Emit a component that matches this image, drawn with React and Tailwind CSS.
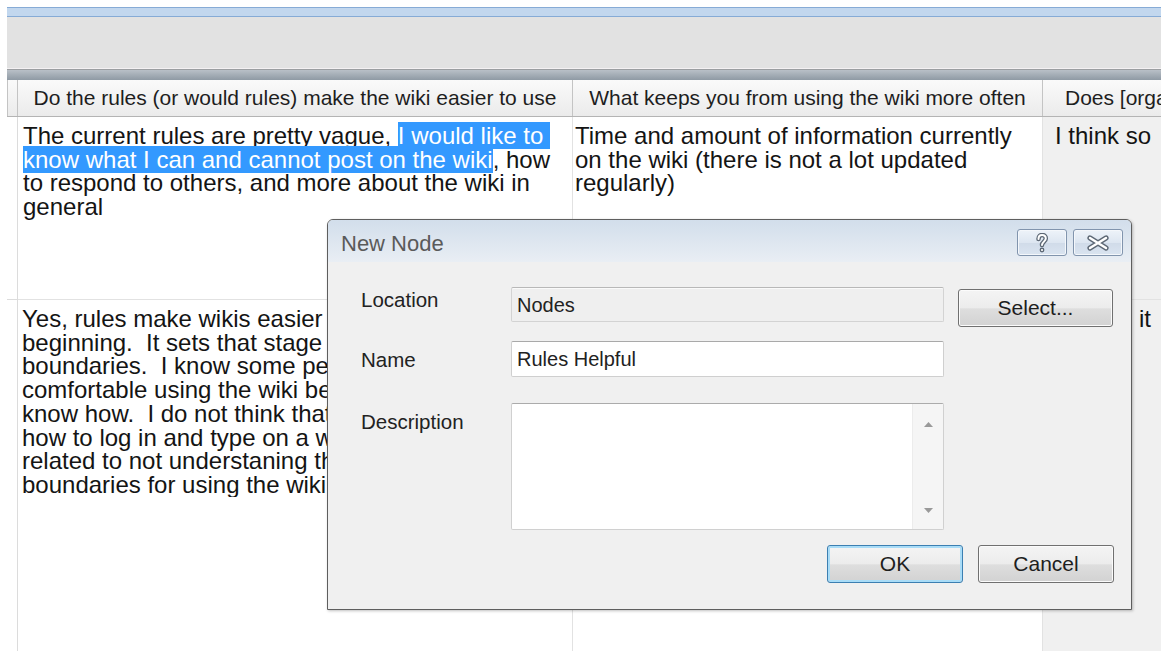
const sel = 'bg-[#3399ff] text-white'

// second answer, cut where the dialog starts
const reasons = [
  'Yes, rules make wikis easier',
  'beginning.  It sets that stage',
  'boundaries.  I know some peo',
  'comfortable using the wiki bec',
  'know how.  I do not think that',
  'how to log in and type on a wi',
  'related to not understaning the',
  'boundaries for using the wiki.',
]

function Line({ children }) {
  return <div className="whitespace-pre">{children}</div>
}

function WinButton({ children, focused, className = '' }) {
  return (
    <div
      className={
        'flex items-center justify-center rounded-[3px] border bg-[linear-gradient(#f4f4f4,#ececec_50%,#dedede_52%,#d2d2d2)] text-[21px] text-[#1e1e1e] ' +
        (focused
          ? 'border-[#3c7fb1] shadow-[inset_0_0_0_2px_#a9dcf7]'
          : 'border-[#707070] shadow-[inset_0_0_0_1px_#fbfbfb]') +
        ' ' +
        className
      }
    >
      {children}
    </div>
  )
}

function CaptionButton({ children }) {
  return (
    <div className="flex h-[27px] w-[50px] items-center justify-center rounded-[3px] border border-[#8194ad] bg-[linear-gradient(#eef3f9,#dde6f1_50%,#d0dbe9_52%,#dae4f0)] shadow-[inset_0_0_0_1px_#f4f7fb]">
      {children}
    </div>
  )
}

export default function App() {
  return (
    <div className="relative h-[651px] w-[1161px] overflow-hidden bg-white font-['Liberation_Sans',Arial,sans-serif] text-[#141414]">
      <div className="ml-[7px] flex h-full flex-col">
        {/* window frame strip and empty toolbar */}
        <div className="mt-[7px] h-[10px] border-y border-[#86abd6] bg-[#c2d7ee]" />
        <div className="h-[51px] bg-[#e2e2e2]" />
        <div className="h-px bg-[#f4f1f3]" />
        <div className="h-px bg-[#9b9ea1]" />
        <div className="h-[10px] bg-gradient-to-b from-[#b9c0c7] to-[#8f9aa4]" />

        {/* column headers */}
        <div className="flex h-[37px] shrink-0 border-b border-[#b4b4b4] bg-gradient-to-b from-[#fafafa] to-[#ebebeb] text-[21px] text-[#1e1e1e]">
          <div className="w-[11px] shrink-0 border-x border-[#c4c4c4]" />
          <div className="flex w-[555px] shrink-0 items-center justify-center whitespace-nowrap border-r border-[#c4c4c4]">
            Do the rules (or would rules) make the wiki easier to use
          </div>
          <div className="flex w-[470px] shrink-0 items-center justify-center whitespace-nowrap border-r border-[#c4c4c4]">
            What keeps you from using the wiki more often
          </div>
          <div className="flex flex-1 items-center overflow-hidden whitespace-nowrap pl-[22px]">
            Does [orga
          </div>
        </div>

        {/* answer rows */}
        <div className="grid flex-1 grid-cols-[11px_555px_470px_1fr] grid-rows-[183px_1fr] text-[24px] leading-[23.7px]">
          <div className="border-b border-r border-[#dcdcdc]" />
          <div className="overflow-hidden border-b border-r border-[#e2e2e2] pl-[5px] pt-[7px]">
            <Line>
              The current rules are pretty vague, <span className={sel}>I would like to </span>
            </Line>
            <Line>
              <span className={sel}>know what I can and cannot post on the wiki</span>, how
            </Line>
            <Line>to respond to others, and more about the wiki in</Line>
            <Line>general</Line>
          </div>
          <div className="overflow-hidden border-b border-r border-[#e2e2e2] pl-[2px] pt-[7px]">
            <Line>Time and amount of information currently</Line>
            <Line>on the wiki (there is not a lot updated</Line>
            <Line>regularly)</Line>
          </div>
          <div className="overflow-hidden border-b border-[#e2e2e2] bg-[#f0f0f0] pl-[12px] pt-[7px]">
            <Line>I think so</Line>
          </div>

          <div className="border-r border-[#dcdcdc]" />
          <div className="border-r border-[#e2e2e2] pl-[4px] pt-[7px]">
            <div className="w-[305px] overflow-hidden">
              {reasons.map((r) => (
                <Line key={r}>{r}</Line>
              ))}
            </div>
          </div>
          <div className="border-r border-[#e2e2e2]" />
          <div className="overflow-hidden bg-[#f0f0f0] pl-[96px] pt-[7px]">
            <Line>it</Line>
          </div>
        </div>
      </div>

      {/* New Node dialog */}
      <div className="absolute left-[327px] top-[219px] flex h-[391px] w-[805px] flex-col overflow-hidden rounded-t-[6px] border border-[#5e5e5e] bg-[#f0f0f0] shadow-[1px_1px_3px_rgba(0,0,0,0.25)]">
        <div className="flex h-[42px] shrink-0 items-start justify-between bg-gradient-to-b from-[#d2deeb] to-[#e9eef4] pl-[13px] pr-[8px]">
          <span className="mt-[11px] text-[22px] leading-[26px] text-[#5a5a5a]">New Node</span>
          <div className="mt-[9px] flex gap-[6px]">
            <CaptionButton>
              <svg width="14" height="20" viewBox="0 0 14 20">
                <g fill="none" strokeLinecap="round">
                  <path d="M3.5 6C3.5 3 5.5 2 7 2c2.5 0 3.8 1.7 3.8 3.6 0 2.8-3.8 3.3-3.8 6.4" stroke="#5d6875" strokeWidth="4.6" />
                  <path d="M3.5 6C3.5 3 5.5 2 7 2c2.5 0 3.8 1.7 3.8 3.6 0 2.8-3.8 3.3-3.8 6.4" stroke="#fff" strokeWidth="2" />
                </g>
                <circle cx="7" cy="17" r="2.4" fill="#5d6875" />
                <circle cx="7" cy="17" r="1.1" fill="#fff" />
              </svg>
            </CaptionButton>
            <CaptionButton>
              <svg width="24" height="16" viewBox="0 0 24 16">
                <path d="M4 3l16 10M20 3L4 13" stroke="#5d6875" strokeWidth="5.2" strokeLinecap="round" />
                <path d="M4 3l16 10M20 3L4 13" stroke="#fff" strokeWidth="2.4" strokeLinecap="round" />
              </svg>
            </CaptionButton>
          </div>
        </div>

        <div className="flex flex-1 flex-col pl-[33px] pr-[17px] pt-[25px] text-[20.5px] leading-[24px] text-[#222]">
          <div className="flex items-start">
            <div className="w-[150px] shrink-0 pt-[1px]">Location</div>
            <div className="flex h-[35px] w-[433px] shrink-0 items-center rounded-[2px] border border-[#d3d3d3] border-t-[#b8b8b8] bg-[#efefef] pl-[5px] text-[20px] shadow-[inset_0_1px_0_#fafafa]">
              Nodes
            </div>
            <WinButton className="ml-[14px] mt-[2px] h-[38px] w-[155px]">Select...</WinButton>
          </div>

          <div className="mt-[14px] flex items-start">
            <div className="w-[150px] shrink-0 pt-[7px]">Name</div>
            <div className="flex h-[36px] w-[433px] shrink-0 items-center rounded-[2px] border border-[#cfcfcf] border-t-[#a9a9a9] bg-white pl-[5px] text-[20px]">
              Rules Helpful
            </div>
          </div>

          <div className="mt-[26px] flex items-start">
            <div className="w-[150px] shrink-0 pt-[7px]">Description</div>
            <div className="flex h-[127px] w-[433px] shrink-0 justify-end rounded-[2px] border border-[#d0d0d0] border-t-[#ababab] bg-white">
              <div className="flex w-[31px] flex-col items-center justify-between border-l border-[#ececec] bg-[#f5f5f5] pb-[16px] pt-[18px]">
                <svg width="9" height="5" viewBox="0 0 9 5">
                  <path d="M0 5L4.5 0 9 5z" fill="#999" />
                </svg>
                <svg width="9" height="5" viewBox="0 0 9 5">
                  <path d="M0 0h9L4.5 5z" fill="#999" />
                </svg>
              </div>
            </div>
          </div>

          <div className="mt-[15px] flex justify-end gap-[15px]">
            <WinButton focused className="h-[38px] w-[136px]">OK</WinButton>
            <WinButton className="h-[38px] w-[136px]">Cancel</WinButton>
          </div>
        </div>
      </div>
    </div>
  )
}
